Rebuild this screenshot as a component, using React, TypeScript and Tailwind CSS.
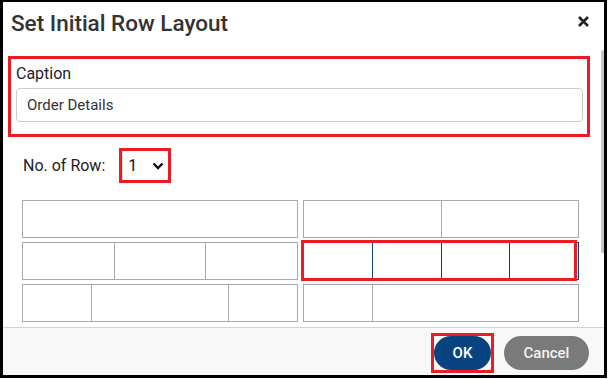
import { useState } from 'react'

const red = 'border-[3px] border-[#ed1c24]'

const leftRows = [[1], [1, 1, 1], [1, 2, 1]]
const rightRows = [[1, 1], [1, 1, 1, 1], [1, 3]]

function Row({ parts, selected }: { parts: number[]; selected?: boolean }) {
  const border = selected ? 'border-[#0c3f78]' : 'border-[#a9a9a9]'
  return (
    <div className={`relative flex h-[38px] border ${border}`}>
      {parts.map((p, i) => (
        <div
          key={i}
          style={{ flexGrow: p, flexBasis: 0 }}
          className={i > 0 ? `border-l ${border}` : ''}
        />
      ))}
      {selected && (
        <span className="pointer-events-none absolute -left-[3px] -top-[3px] -bottom-[2px] right-[1px] border-[3px] border-[#ed1c24]" />
      )}
    </div>
  )
}

export default function App() {
  const [caption, setCaption] = useState('Order Details')

  return (
    <div className="relative h-[379px] w-[609px] overflow-hidden bg-white" style={{ fontFamily: 'Roboto, "Noto Sans", sans-serif' }}>
      <div className="flex h-[378px] w-[607px] flex-col border-b-[3px] border-l-[3px] border-r-[3px] border-t-2 border-black bg-white">
        {/* Header */}
        <div className="flex h-[54px] items-start justify-between pl-[8px] pr-[15px] pt-[8px]">
          <h2 className="text-[22.5px] font-medium leading-[26px] text-[#333333]">Set Initial Row Layout</h2>
          <button className="mt-[6px] text-[#222]">
            <svg width="11" height="11" viewBox="0 0 11 11">
              <path d="M1 1L10 10M10 1L1 10" stroke="currentColor" strokeWidth="2.6" />
            </svg>
          </button>
        </div>

        {/* Body */}
        <div className="flex-1">
          <div className={`ml-[5px] h-[81px] w-[582px] ${red} pl-[5px] pt-[5px]`}>
            <label className="block text-[16px] leading-[20px] text-[#1d1d2b]">Caption</label>
            <input
              value={caption}
              onChange={(e) => setCaption(e.target.value)}
              className="mt-[4px] h-[34px] w-[567px] rounded-[4px] border border-[#cccccc] px-[10px] text-[15px] text-[#333] outline-none"
            />
          </div>

          <div className="ml-[20px] mt-[11px] flex items-center">
            <span className="text-[16px] text-[#222]">No. of Row:</span>
            <div className={`ml-[14px] h-[35px] w-[52px] ${red}`}>
              <div className="flex h-full items-center border-l border-[#d4d4d4] pl-[5px] pr-[4px]">
                <span className="text-[16px] leading-none text-[#111]">1</span>
                <svg className="ml-auto" width="12" height="8" viewBox="0 0 12 8">
                  <path d="M1.5 1.5L6 6L10.5 1.5" fill="none" stroke="#111" strokeWidth="2.4" />
                </svg>
              </div>
            </div>
          </div>

          <div className="ml-[19px] mt-[17px] grid w-[557px] grid-cols-2 gap-x-[5px] gap-y-[4px]">
            {leftRows.map((l, i) => [
              <Row key={`l${i}`} parts={l} />,
              <Row key={`r${i}`} parts={rightRows[i]} selected={i === 1} />,
            ])}
          </div>
        </div>

        {/* Footer */}
        <div className="flex h-[48px] items-start justify-end gap-[10px] border-t border-[#d2d2d2] bg-[#f8f8f8] pr-[15px] pt-[5px]">
          <div className={red}>
            <button className="h-[34px] w-[57px] rounded-full bg-[#0a4480] text-[15px] font-medium text-white">OK</button>
          </div>
          <button className="mt-[3px] h-[34px] w-[85px] rounded-full bg-[#7a7a7a] text-[15px] font-medium text-[#f2f2f2]">Cancel</button>
        </div>
      </div>
      {/* scrollbar thumb */}
      <div className="absolute left-[601px] top-[50px] h-[203px] w-[3px] rounded-t-full bg-[#c6c6c6]" />
    </div>
  )
}
